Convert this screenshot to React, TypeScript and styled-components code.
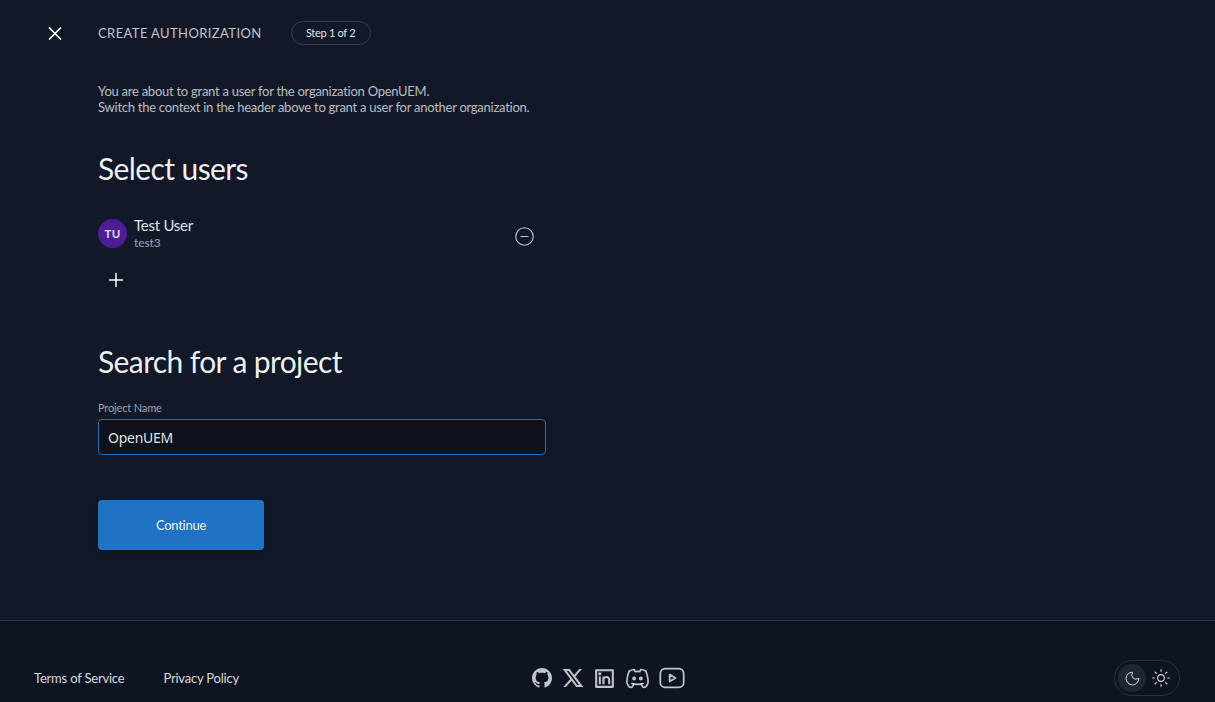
import { createGlobalStyle, styled } from "styled-components";
import { CircleMinus, Moon, Plus, Sun, X } from "lucide-react";
import { RiGithubFill, RiTwitterXLine, RiLinkedinBoxLine } from "react-icons/ri";
import { TbBrandDiscord, TbBrandYoutube } from "react-icons/tb";

const GlobalStyle = createGlobalStyle`
  html, body {
    margin: 0;
    padding: 0;
    height: 702px;
    overflow: hidden;
    background: #111827;
    font-family: "Lato", "Liberation Sans", sans-serif;
    color: #fff;
  }
  * { box-sizing: border-box; }
`;

const Page = styled.div`
  height: 702px;
  display: flex;
  flex-direction: column;
`;

const Main = styled.main`
  flex: 1;
  display: flex;
  flex-direction: column;
`;

const Header = styled.header`
  height: 66px;
  display: flex;
  align-items: center;
  padding-left: 44px;
`;

const CloseButton = styled.button`
  width: 22px;
  height: 22px;
  padding: 0;
  margin-right: 32px;
  background: none;
  border: 0;
  color: #fff;
  display: flex;
  align-items: center;
  justify-content: center;
`;

const Title = styled.span`
  font-size: 13px;
  letter-spacing: 0.4px;
  text-transform: uppercase;
  color: rgba(255, 255, 255, 0.75);
  margin-right: 29px;
`;

const StepChip = styled.span`
  height: 24px;
  width: 80px;
  border: 1px solid rgba(255, 255, 255, 0.16);
  border-radius: 12px;
  font-size: 11px;
  letter-spacing: -0.3px;
  line-height: 20px;
  display: flex;
  align-items: center;
  justify-content: center;
  padding-bottom: 1px;
  color: rgba(255, 255, 255, 0.9);
`;

const Content = styled.div`
  padding: 17px 0 0 98px;
  width: 644px;
`;

const Description = styled.p`
  margin: 0;
  font-size: 13px;
  letter-spacing: -0.26px;
  line-height: 16px;
  color: rgba(255, 255, 255, 0.72);
`;

const Heading = styled.h2<{ $top: number }>`
  margin: ${(p) => p.$top}px 0 0;
  font-size: 30px;
  letter-spacing: -0.6px;
  line-height: 36px;
  font-weight: 400;
  color: rgba(255, 255, 255, 0.95);
`;

const UserRow = styled.div`
  margin-top: 29px;
  width: 437px;
  height: 36px;
  display: flex;
  align-items: center;
`;

const Avatar = styled.div`
  width: 29px;
  height: 29px;
  border-radius: 50%;
  background: #4c1d95;
  color: rgba(255, 255, 255, 0.85);
  font-size: 11.5px;
  font-weight: 700;
  letter-spacing: 0.4px;
  display: flex;
  align-items: center;
  justify-content: center;
  margin-right: 7px;
`;

const UserInfo = styled.div`
  flex: 1;
  display: flex;
  flex-direction: column;
`;

const UserName = styled.span`
  font-size: 15px;
  letter-spacing: -0.25px;
  line-height: 18px;
  color: rgba(255, 255, 255, 0.9);
`;

const UserLogin = styled.span`
  margin-top: 1px;
  font-size: 12px;
  letter-spacing: -0.1px;
  line-height: 16px;
  color: rgba(255, 255, 255, 0.6);
`;

const RemoveButton = styled.button`
  padding: 0;
  background: none;
  border: 0;
  color: rgba(255, 255, 255, 0.75);
  display: flex;
  margin-top: 7px;
`;

const AddButton = styled.button`
  margin: 18px 0 0 7px;
  width: 22px;
  height: 22px;
  padding: 0;
  background: none;
  border: 0;
  color: #fff;
  display: flex;
  align-items: center;
  justify-content: center;
`;

const Label = styled.label`
  display: block;
  margin-top: 22px;
  font-size: 11px;
  letter-spacing: -0.15px;
  line-height: 14px;
  color: rgba(255, 255, 255, 0.6);
`;

const Input = styled.input`
  display: block;
  margin-top: 4px;
  width: 448px;
  height: 36px;
  padding: 0 9px;
  background: #0e121c;
  border: 1px solid #1f6fbd;
  border-radius: 4px;
  outline: none;
  font-family: "Noto Sans", sans-serif;
  font-size: 14px;
  letter-spacing: -0.25px;
  color: rgba(255, 255, 255, 0.9);
`;

const ContinueButton = styled.button`
  display: block;
  margin-top: 45px;
  width: 166px;
  height: 50px;
  background: #2073c4;
  border: 0;
  border-radius: 4px;
  font-family: "Lato", sans-serif;
  font-size: 13px;
  letter-spacing: -0.25px;
  color: rgba(255, 255, 255, 0.95);
  box-shadow: 0 1px 3px rgba(0, 0, 0, 0.25);
`;

const Footer = styled.footer`
  height: 82px;
  background: #0e1522;
  border-top: 1px solid rgba(255, 255, 255, 0.14);
  display: grid;
  grid-template-columns: 1fr auto 1fr;
  align-items: center;
  padding: 33px 35px 0 34px;
`;

const FooterLinks = styled.nav`
  display: flex;
  gap: 39px;
`;

const FooterLink = styled.a`
  font-size: 13px;
  letter-spacing: -0.2px;
  color: rgba(255, 255, 255, 0.85);
`;

const Socials = styled.div`
  display: flex;
  align-items: center;
  gap: 7px;
  padding-left: 2px;
  color: rgba(255, 255, 255, 0.75);
`;

const ThemeSwitch = styled.div`
  justify-self: end;
  width: 66px;
  height: 36px;
  border: 1px solid rgba(255, 255, 255, 0.12);
  border-radius: 18px;
  display: flex;
  align-items: center;
  gap: 1px;
  padding-left: 3px;
`;

const ThemeOption = styled.span<{ $active?: boolean }>`
  width: 28px;
  height: 28px;
  border-radius: 50%;
  display: flex;
  align-items: center;
  justify-content: center;
  color: rgba(255, 255, 255, 0.8);
  background: ${(p) => (p.$active ? "rgba(255, 255, 255, 0.08)" : "transparent")};
`;

export default function App() {
  return (
    <Page>
      <GlobalStyle />
      <Main>
        <Header>
          <CloseButton aria-label="Close">
            <X size={23} strokeWidth={1.9} />
          </CloseButton>
          <Title>Create Authorization</Title>
          <StepChip>Step 1 of 2</StepChip>
        </Header>
        <Content>
          <Description>
            You are about to grant a user for the organization OpenUEM.
            <br />
            Switch the context in the header above to grant a user for another organization.
          </Description>
          <Heading $top={35}>Select users</Heading>
          <UserRow>
            <Avatar>TU</Avatar>
            <UserInfo>
              <UserName>Test User</UserName>
              <UserLogin>test3</UserLogin>
            </UserInfo>
            <RemoveButton aria-label="Remove">
              <CircleMinus size={21} strokeWidth={1.3} />
            </RemoveButton>
          </UserRow>
          <AddButton aria-label="Add">
            <Plus size={22} strokeWidth={1.6} />
          </AddButton>
          <Heading $top={52}>Search for a project</Heading>
          <Label htmlFor="project">Project Name</Label>
          <Input id="project" defaultValue="OpenUEM" />
          <ContinueButton>Continue</ContinueButton>
        </Content>
      </Main>
      <Footer>
        <FooterLinks>
          <FooterLink>Terms of Service</FooterLink>
          <FooterLink>Privacy Policy</FooterLink>
        </FooterLinks>
        <Socials>
          <RiGithubFill size={24} />
          <RiTwitterXLine size={24} />
          <RiLinkedinBoxLine size={25} />
          <TbBrandDiscord size={27} strokeWidth={1.5} />
          <TbBrandYoutube size={28} strokeWidth={1.5} />
        </Socials>
        <ThemeSwitch>
          <ThemeOption $active>
            <Moon size={17} strokeWidth={1.4} />
          </ThemeOption>
          <ThemeOption>
            <Sun size={20} strokeWidth={1.4} />
          </ThemeOption>
        </ThemeSwitch>
      </Footer>
    </Page>
  );
}
